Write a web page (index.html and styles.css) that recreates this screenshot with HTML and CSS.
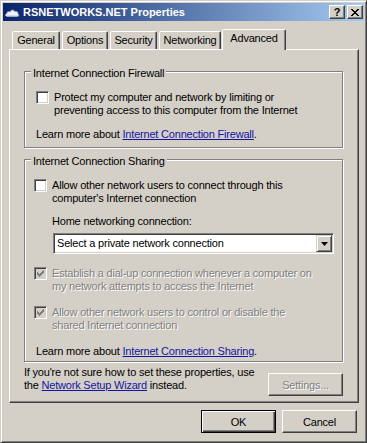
FILE: index.html
```html
<!DOCTYPE html>
<html lang="en">
<head>
    <meta charset="UTF-8">
    <title>RSNETWORKS.NET Properties</title>
    <link rel="stylesheet" href="styles.css">
</head>
<body>
    <div class="window">
        <div class="titlebar">
            <svg class="app-icon" width="16" height="16" viewBox="0 0 16 16">
                <path d="M3 12.5 C1 12.5 0.8 9.8 2.8 9.6 C2.6 7.6 5 6.8 6 8 C6.6 5.6 10 5.4 10.8 7.6 C12.6 6.8 14.6 8.2 14 10 C15.4 10.4 15 12.5 13.4 12.5 Z" fill="#eef2fa" stroke="#7f8fb0" stroke-width="0.7"/>
                <path d="M3 12 L13.4 12" stroke="#b7c2da" stroke-width="1"/>
            </svg>
            <span class="title">RSNETWORKS.NET Properties</span>
            <div class="caption-buttons">
                <button class="cap-btn help">?</button>
                <button class="cap-btn close">
                    <svg width="8" height="7" viewBox="0 0 8 7">
                        <path d="M0 0h2v1h-2z M6 0h2v1h-2z M1 1h2v1h-2z M5 1h2v1h-2z M2 2h4v1h-4z M3 3h2v1h-2z M2 4h4v1h-4z M1 5h2v1h-2z M5 5h2v1h-2z M0 6h2v1h-2z M6 6h2v1h-2z" fill="#000"/>
                    </svg>
                </button>
            </div>
        </div>

        <div class="content">
            <div class="tabs">
                <div class="tab tab-general">General</div>
                <div class="tab tab-options">Options</div>
                <div class="tab tab-security">Security</div>
                <div class="tab tab-networking">Networking</div>
                <div class="tab tab-advanced selected">Advanced</div>
            </div>

            <div class="panel">
                <div class="group firewall">
                    <div class="group-title">Internet Connection Firewall</div>
                    <div class="check-row first">
                        <span class="box"></span>
                        <span>Protect my computer and network by limiting or<br>preventing access to this computer from the Internet</span>
                    </div>
                    <div class="learn">Learn more about <a href="#" class="link">Internet Connection Firewall</a>.</div>
                </div>

                <div class="group sharing">
                    <div class="group-title">Internet Connection Sharing</div>
                    <div class="check-row first shift">
                        <span class="box"></span>
                        <span>Allow other network users to connect through this<br>computer's Internet connection</span>
                    </div>
                    <div class="field-label">Home networking connection:</div>
                    <div class="combo">
                        <span class="combo-text">Select a private network connection</span>
                        <span class="combo-btn">
                            <svg width="7" height="4" viewBox="0 0 7 4"><path d="M0 0h7L3.5 4z" fill="#000"/></svg>
                        </span>
                    </div>
                    <div class="check-row spaced shift dim">
                        <span class="box disabled">
                            <svg width="7" height="7" viewBox="0 0 7 7">
                                <path d="M6 0h1v1h-1z M5 1h2v1h-2z M0 2h1v1h-1z M4 2h3v1h-3z M0 3h2v1h-2z M3 3h3v1h-3z M0 4h5v1h-5z M1 5h3v1h-3z M2 6h1v1h-1z" fill="#808080"/>
                            </svg>
                        </span>
                        <span>Establish a dial-up connection whenever a computer on<br>my network attempts to access the Internet</span>
                    </div>
                    <div class="check-row spaced shift dim">
                        <span class="box disabled">
                            <svg width="7" height="7" viewBox="0 0 7 7">
                                <path d="M6 0h1v1h-1z M5 1h2v1h-2z M0 2h1v1h-1z M4 2h3v1h-3z M0 3h2v1h-2z M3 3h3v1h-3z M0 4h5v1h-5z M1 5h3v1h-3z M2 6h1v1h-1z" fill="#808080"/>
                            </svg>
                        </span>
                        <span>Allow other network users to control or disable the<br>shared Internet connection</span>
                    </div>
                    <div class="learn spaced">Learn more about <a href="#" class="link">Internet Connection Sharing</a>.</div>
                </div>

                <div class="footer-row">
                    <div class="hint">If you're not sure how to set these properties, use<br>the <a href="#" class="link">Network Setup Wizard</a> instead.</div>
                    <button class="btn settings" disabled>Settings...</button>
                </div>
            </div>

            <div class="actions">
                <button class="btn default">OK</button>
                <button class="btn">Cancel</button>
            </div>
        </div>
    </div>
</body>
</html>
```

FILE: styles.css
```css
body {
    margin: 0;
    background-color: #d4d0c8;
    font-family: "Liberation Sans", Arial, sans-serif;
    font-size: 11px;
    line-height: 13px;
    letter-spacing: -0.2px;
    color: #000;
}

.window {
    width: 367px;
    height: 443px;
    box-sizing: border-box;
    border: 1px solid;
    border-color: #d4d0c8 #404040 #404040 #d4d0c8;
    box-shadow: inset 1px 1px #fff, inset -1px -1px #808080;
    padding: 2px;
    display: flex;
    flex-direction: column;
}

/* Title bar */
.titlebar {
    height: 18px;
    flex: none;
    display: flex;
    align-items: center;
    padding: 0 1px 0 1px;
    background: linear-gradient(to right, #0a246a, #a6caf0);
    color: #fff;
    font-weight: bold;
    letter-spacing: 0;
}

.app-icon {
    display: block;
    margin-right: 3px;
}

.title {
    flex: 1;
}

.caption-buttons {
    display: flex;
    gap: 2px;
}

.cap-btn {
    width: 16px;
    height: 14px;
    box-sizing: border-box;
    padding: 0;
    border: 1px solid;
    border-color: #fff #404040 #404040 #fff;
    box-shadow: inset -1px -1px #808080;
    background-color: #d4d0c8;
    display: flex;
    align-items: center;
    justify-content: center;
    font-family: "Liberation Sans", Arial, sans-serif;
    font-size: 11px;
    font-weight: bold;
    color: #000;
}

.cap-btn svg {
    display: block;
}

/* Tabs */
.content {
    flex: 1;
    display: flex;
    flex-direction: column;
    padding: 8px 5px 0 6px;
}

.tabs {
    display: flex;
    align-items: flex-end;
    height: 20px;
    padding-left: 3px;
}

.tab {
    height: 18px;
    box-sizing: border-box;
    border: 1px solid;
    border-bottom: none;
    border-color: #fff #404040 transparent #fff;
    border-radius: 2px 2px 0 0;
    box-shadow: inset -1px 0 #808080;
    display: flex;
    justify-content: center;
    padding-top: 2px;
    background-color: #d4d0c8;
}

.tab-general { width: 48px; }
.tab-options { width: 46px; margin-left: 2px; }
.tab-security { width: 47px; margin-left: 2px; }
.tab-networking { width: 62px; margin-left: 2px; }
.tab-advanced { width: 64px; margin-left: 1px; }

.tab.selected {
    height: 21px;
    margin-bottom: -1px;
    position: relative;
    z-index: 1;
}

.panel {
    border: 1px solid;
    border-color: #fff #404040 #404040 #fff;
    box-shadow: inset -1px -1px #808080;
    padding: 21px 15px 6px 14px;
}

/* Group boxes */
.group {
    border: 1px solid #808080;
    box-shadow: inset 1px 1px #fff, 1px 1px #fff;
    padding: 0 6px 6px 11px;
}

.group.sharing {
    margin-top: 11px;
    padding-bottom: 3px;
}

.group-title {
    width: fit-content;
    margin: -5px 0 0 -5px;
    padding: 0 2px;
    background-color: #d4d0c8;
}

.check-row {
    display: flex;
    align-items: flex-start;
    gap: 5px;
}

.check-row.first {
    margin-top: 11px;
}

.check-row.spaced {
    margin-top: 13px;
}

.check-row.shift {
    margin-left: -2px;
}

.box {
    width: 13px;
    height: 13px;
    flex: none;
    box-sizing: border-box;
    border: 1px solid;
    border-color: #808080 #fff #fff #808080;
    box-shadow: inset 1px 1px #404040, inset -1px -1px #d4d0c8;
    background-color: #fff;
}

.box.disabled {
    background-color: #d4d0c8;
}

.box svg {
    display: block;
    margin: 2px 0 0 2px;
}

.dim {
    color: #808080;
    text-shadow: 1px 1px #fff;
}

.learn {
    margin-top: 11px;
}

.learn.spaced {
    margin-top: 13px;
}

.link {
    color: #1414a0;
    text-decoration: underline;
}

.field-label {
    margin: 10px 0 0 16px;
}

.combo {
    width: 281px;
    height: 21px;
    box-sizing: border-box;
    margin: 5px 0 0 17px;
    padding: 1px;
    display: flex;
    align-items: center;
    border: 1px solid;
    border-color: #808080 #fff #fff #808080;
    box-shadow: inset 1px 1px #404040, inset -1px -1px #d4d0c8;
    background-color: #fff;
}

.combo-text {
    flex: 1;
    padding-left: 2px;
}

.combo-btn {
    width: 16px;
    height: 17px;
    box-sizing: border-box;
    border: 1px solid;
    border-color: #d4d0c8 #404040 #404040 #d4d0c8;
    box-shadow: inset 1px 1px #fff, inset -1px -1px #808080;
    background-color: #d4d0c8;
    display: flex;
    align-items: center;
    justify-content: center;
}

.combo-btn svg {
    display: block;
}

/* Footer of panel */
.footer-row {
    display: flex;
    justify-content: space-between;
    align-items: flex-start;
    margin-top: 4px;
}

.btn {
    width: 75px;
    height: 23px;
    box-sizing: border-box;
    padding: 0;
    border: 1px solid;
    border-color: #fff #404040 #404040 #fff;
    box-shadow: inset -1px -1px #808080;
    background-color: #d4d0c8;
    font-family: inherit;
    font-size: 11px;
    letter-spacing: inherit;
    color: #000;
}

.btn.settings {
    margin-top: 7px;
    color: #808080;
    text-shadow: 1px 1px #fff;
}

.btn.default {
    border-color: #000;
    box-shadow: inset 1px 1px #fff, inset -1px -1px #404040, inset -2px -2px #808080;
}

.actions {
    display: flex;
    justify-content: flex-end;
    gap: 6px;
    padding: 7px 2px 0 0;
}
```
